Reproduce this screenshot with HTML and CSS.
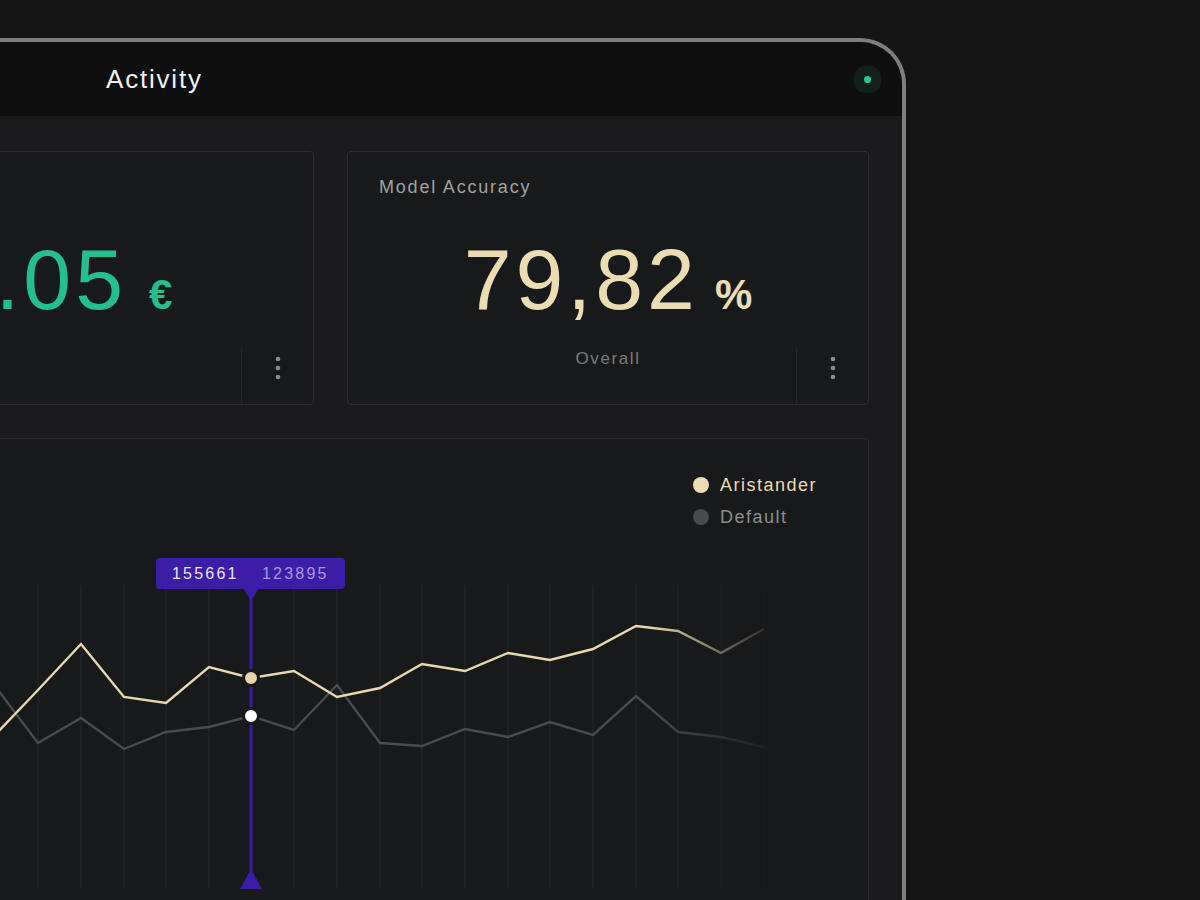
FILE: index.html
```html
<!DOCTYPE html>
<html lang="en">
<head>
  <meta charset="UTF-8">
  <title>Activity</title>
  <link rel="stylesheet" href="styles.css">
</head>
<body>
  <div class="device">
    <header class="topbar">
      <h1>Activity</h1>
      <span class="status"></span>
    </header>

    <main class="content">
      <section class="cards">
        <div class="card">
          <div class="card-title">Avg. Cost</div>
          <div class="value green">0.05<span class="unit">€</span></div>
          <div class="card-foot">
            <span></span>
            <span class="foot-label"></span>
            <button class="kebab" aria-label="More">
              <svg width="6" height="24" viewBox="0 0 6 24"><circle cx="3" cy="3" r="2.3"/><circle cx="3" cy="12" r="2.3"/><circle cx="3" cy="21" r="2.3"/></svg>
            </button>
          </div>
        </div>

        <div class="card">
          <div class="card-title">Model Accuracy</div>
          <div class="value cream">79,82<span class="unit">%</span></div>
          <div class="card-foot">
            <span></span>
            <span class="foot-label">Overall</span>
            <button class="kebab" aria-label="More">
              <svg width="6" height="24" viewBox="0 0 6 24"><circle cx="3" cy="3" r="2.3"/><circle cx="3" cy="12" r="2.3"/><circle cx="3" cy="21" r="2.3"/></svg>
            </button>
          </div>
        </div>
      </section>

      <section class="chart-card">
        <ul class="legend">
          <li class="legend-item aristander"><i></i>Aristander</li>
          <li class="legend-item default"><i></i>Default</li>
        </ul>

        <svg class="chart" width="1075" height="352" viewBox="-207 548 1075 352">
          <defs>
            <linearGradient id="fade" gradientUnits="userSpaceOnUse" x1="650" y1="0" x2="780" y2="0">
              <stop offset="0" stop-color="#fff"/>
              <stop offset="1" stop-color="#000"/>
            </linearGradient>
            <mask id="fadeMask" maskUnits="userSpaceOnUse" x="-207" y="548" width="1075" height="352">
              <rect x="-207" y="548" width="1075" height="352" fill="url(#fade)"/>
            </mask>
          </defs>

          <g mask="url(#fadeMask)">
            <g class="grid">
              <line x1="-175" x2="-175" y1="585" y2="888"/>
              <line x1="-133" x2="-133" y1="585" y2="888"/>
              <line x1="-90" x2="-90" y1="585" y2="888"/>
              <line x1="-47" x2="-47" y1="585" y2="888"/>
              <line x1="-5" x2="-5" y1="585" y2="888"/>
              <line x1="38" x2="38" y1="585" y2="888"/>
              <line x1="81" x2="81" y1="585" y2="888"/>
              <line x1="124" x2="124" y1="585" y2="888"/>
              <line x1="166" x2="166" y1="585" y2="888"/>
              <line x1="209" x2="209" y1="585" y2="888"/>
              <line x1="294" x2="294" y1="585" y2="888"/>
              <line x1="337" x2="337" y1="585" y2="888"/>
              <line x1="380" x2="380" y1="585" y2="888"/>
              <line x1="422" x2="422" y1="585" y2="888"/>
              <line x1="465" x2="465" y1="585" y2="888"/>
              <line x1="508" x2="508" y1="585" y2="888"/>
              <line x1="550" x2="550" y1="585" y2="888"/>
              <line x1="593" x2="593" y1="585" y2="888"/>
              <line x1="636" x2="636" y1="585" y2="888"/>
              <line x1="678" x2="678" y1="585" y2="888"/>
              <line x1="721" x2="721" y1="585" y2="888"/>
              <line x1="764" x2="764" y1="585" y2="888"/>
            </g>

            <polyline class="series-default" points="-207,730 -175,720 -133,745 -90,728 -47,740 -5,686 38,743 81,718 124,749 166,732 209,727 251,716 294,730 337,685 380,743 422,746 465,729 508,737 550,722 593,735 636,696 678,732 721,737 764,747"/>
            <polyline class="series-main" points="-207,705 -175,720 -133,690 -90,712 -47,700 -5,735 38,690 81,644 124,697 166,703 209,667 251,678 294,671 337,697 380,688 422,664 465,671 508,653 550,660 593,649 636,626 678,631 721,653 764,629"/>
          </g>

          <!-- hover cursor -->
          <g class="cursor">
            <rect x="156" y="558" width="189" height="31" rx="4"/>
            <polygon points="243,588 259,588 251,601"/>
            <line x1="251" x2="251" y1="590" y2="876"/>
            <polygon points="240,889 262,889 251,869"/>
            <text class="tip-main" x="172" y="579">155661</text>
            <text class="tip-alt" x="262" y="579">123895</text>
          </g>

          <circle class="dot-main" cx="251" cy="678" r="7.5"/>
          <circle class="dot-default" cx="251" cy="716" r="7.5"/>
        </svg>
      </section>
    </main>
  </div>
</body>
</html>
```

FILE: styles.css
```css
/* Page */
body {
  margin: 0;
  height: 900px;
  overflow: hidden;
  background: #151515;
  font-family: "Liberation Sans", Arial, sans-serif;
  color: #e8e8e8;
}

/* Device frame */
.device {
  box-sizing: border-box;
  width: 1151px;
  height: 900px;
  margin: 38px 0 0 -245px;
  border: 4px solid #7e7e7e;
  border-bottom: none;
  border-radius: 0 46px 0 0;
  background: #1a1a1c;
  overflow: hidden;
}

/* Top bar */
.topbar {
  height: 74px;
  background: #0f0f10;
  display: flex;
  align-items: center;
  justify-content: space-between;
  padding: 0 31px 0 347px;
}

.topbar h1 {
  margin: 0;
  font-size: 26px;
  font-weight: normal;
  letter-spacing: 1.8px;
  color: #f2f2f2;
}

.status {
  width: 7px;
  height: 7px;
  border-radius: 50%;
  background: #27c98f;
  box-shadow: 0 0 0 10px #12211a;
}

/* Content */
.content {
  padding: 35px 33px 0;
  display: flex;
  flex-direction: column;
  gap: 33px;
}

.cards {
  display: grid;
  grid-template-columns: 1fr 1fr;
  gap: 33px;
}

.card {
  box-sizing: border-box;
  height: 254px;
  padding-top: 24px;
  border: 1px solid #2a2b2e;
  border-radius: 4px;
  background: #18191b;
  display: flex;
  flex-direction: column;
}

.card-title {
  padding-left: 31px;
  font-size: 18px;
  line-height: 22px;
  letter-spacing: 1.8px;
  color: #a2a2a2;
}

.value {
  margin-top: 38px;
  text-align: center;
  font-size: 86px;
  line-height: 86px;
  letter-spacing: 4px;
}

.value .unit {
  margin-left: 16px;
  font-size: 42px;
  font-weight: bold;
  letter-spacing: 0;
}

.green {
  color: #22c08c;
  padding-left: 10px;
}

.green .unit {
  margin-left: 22px;
}

.cream { color: #ecdcb1; }

.card-foot {
  margin-top: auto;
  height: 56px;
  display: grid;
  grid-template-columns: 72px 1fr 72px;
}

.foot-label {
  text-align: center;
  font-size: 17px;
  line-height: 22px;
  letter-spacing: 1.6px;
  color: #7b7b7b;
}

.kebab {
  border: none;
  border-left: 1px solid #26272a;
  background: none;
  padding: 8px 0 0;
  display: flex;
  justify-content: center;
  align-items: flex-start;
  cursor: pointer;
}

.kebab svg {
  fill: #8c8c8c;
}

/* Chart */
.chart-card {
  height: 520px;
  padding-top: 35px;
  border: 1px solid #2a2b2e;
  border-radius: 4px;
  background: #18191b;
  display: flex;
  flex-direction: column;
}

.legend {
  align-self: flex-end;
  margin: 0 51px 0 0;
  padding: 0;
  list-style: none;
  display: flex;
  flex-direction: column;
  gap: 10px;
}

.legend-item {
  display: flex;
  align-items: center;
  gap: 11px;
  font-size: 18px;
  line-height: 22px;
  letter-spacing: 1.5px;
}

.legend-item i {
  width: 16px;
  height: 16px;
  border-radius: 50%;
}

.aristander { color: #e9dcb5; }
.aristander i { background: #eddcb2; }
.default { color: #8d8d8d; }
.default i { background: #464a4b; }

.chart {
  display: block;
  margin-top: 20px;
}

.grid line {
  stroke: #24262a;
  stroke-width: 1.2;
}

.series-main,
.series-default {
  fill: none;
  stroke-width: 2.4;
  stroke-linejoin: miter;
}

.series-main { stroke: #e7d8ad; }
.series-default { stroke: #494c4e; }

.cursor rect,
.cursor polygon {
  fill: #3c1da6;
}

.cursor line {
  stroke: #3c1da6;
  stroke-width: 3;
}

.cursor text {
  font-family: "Liberation Sans", Arial, sans-serif;
  font-size: 16px;
  letter-spacing: 2.2px;
}

.tip-main { fill: #ece6f7; }
.tip-alt { fill: #a897e3; }

.dot-main,
.dot-default {
  stroke: #18191b;
  stroke-width: 3;
}

.dot-main { fill: #e6d5a9; }
.dot-default { fill: #ffffff; }
```
